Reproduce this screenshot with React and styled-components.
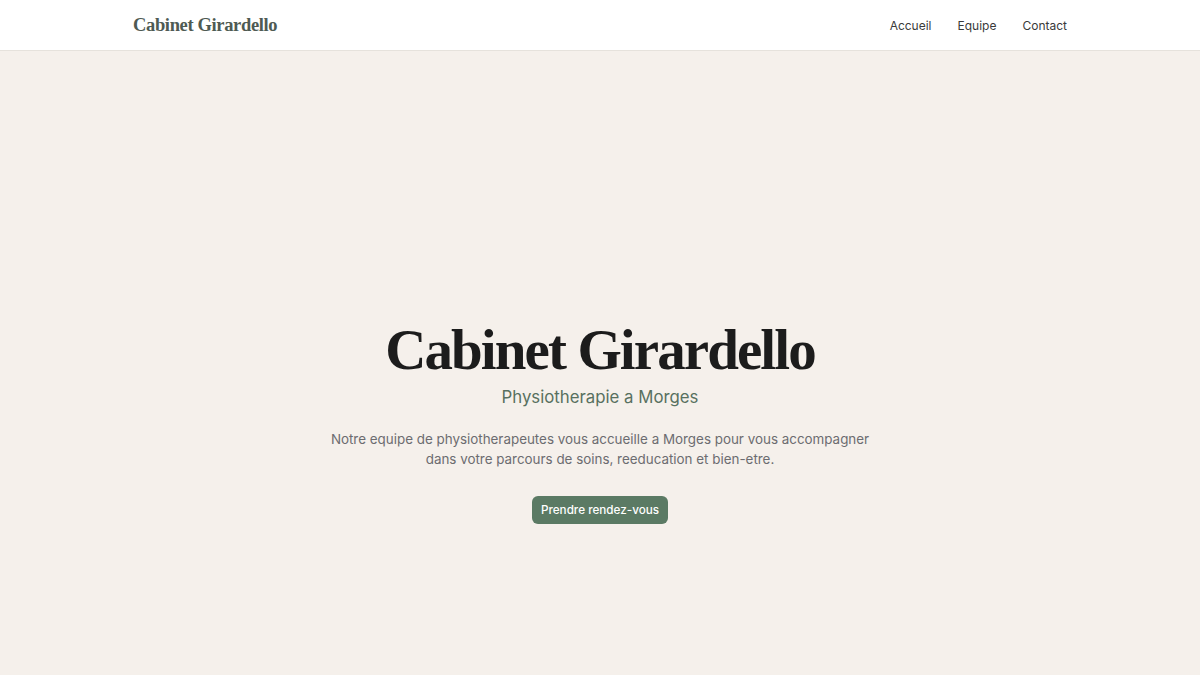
import React from "react";
import styled, { createGlobalStyle } from "styled-components";

const Global = createGlobalStyle`
  html, body { margin: 0; padding: 0; }
  body { background: #f5f0eb; font-family: Inter, "Noto Sans", sans-serif; }
  * { box-sizing: border-box; }
`;

const Header = styled.header`
  background: #ffffff;
  border-bottom: 1px solid #e6e2dc;
  height: 51px;
`;

const HeaderInner = styled.div`
  max-width: 934px;
  margin: 0 auto;
  height: 100%;
  display: flex;
  align-items: center;
  justify-content: space-between;
`;

const Logo = styled.a`
  font-family: "Liberation Serif", "DejaVu Serif", serif;
  font-weight: 700;
  font-size: 18.5px;
  color: #4e5a53;
  text-decoration: none;
  letter-spacing: -0.35px;
`;

const Nav = styled.nav`
  display: flex;
  gap: 26px;
`;

const NavLink = styled.a`
  font-size: 12px;
  color: #3a3a3a;
  text-decoration: none;
`;

const Hero = styled.main`
  display: flex;
  flex-direction: column;
  align-items: center;
  text-align: center;
  padding-top: 263px;
  min-height: 624px;
`;

const Title = styled.h1`
  margin: 0;
  font-family: "Liberation Serif", "DejaVu Serif", serif;
  font-weight: 700;
  font-size: 57px;
  line-height: 72px;
  color: #1c1c1c;
  letter-spacing: -1.9px;
`;

const Subtitle = styled.p`
  margin: 0;
  font-size: 16.8px;
  line-height: 23px;
  color: #587060;
`;

const Lead = styled.p`
  margin: 20px 0 0;
  max-width: 560px;
  font-size: 13.4px;
  line-height: 20px;
  color: #6c6c70;
`;

const Button = styled.a`
  margin-top: 27px;
  display: inline-flex;
  align-items: center;
  height: 28px;
  padding: 0 9px;
  border-radius: 6px;
  background: #5b7a64;
  color: #ffffff;
  font-size: 11.7px;
  font-weight: 500;
  text-decoration: none;
`;

export default function App() {
  return (
    <>
      <Global />
      <Header>
        <HeaderInner>
          <Logo href="#">Cabinet Girardello</Logo>
          <Nav>
            <NavLink href="#">Accueil</NavLink>
            <NavLink href="#">Equipe</NavLink>
            <NavLink href="#">Contact</NavLink>
          </Nav>
        </HeaderInner>
      </Header>
      <Hero>
        <Title>Cabinet Girardello</Title>
        <Subtitle>Physiotherapie a Morges</Subtitle>
        <Lead>
          Notre equipe de physiotherapeutes vous accueille a Morges pour vous accompagner dans votre parcours de soins, reeducation et bien-etre.
        </Lead>
        <Button href="#">Prendre rendez-vous</Button>
      </Hero>
    </>
  );
}
